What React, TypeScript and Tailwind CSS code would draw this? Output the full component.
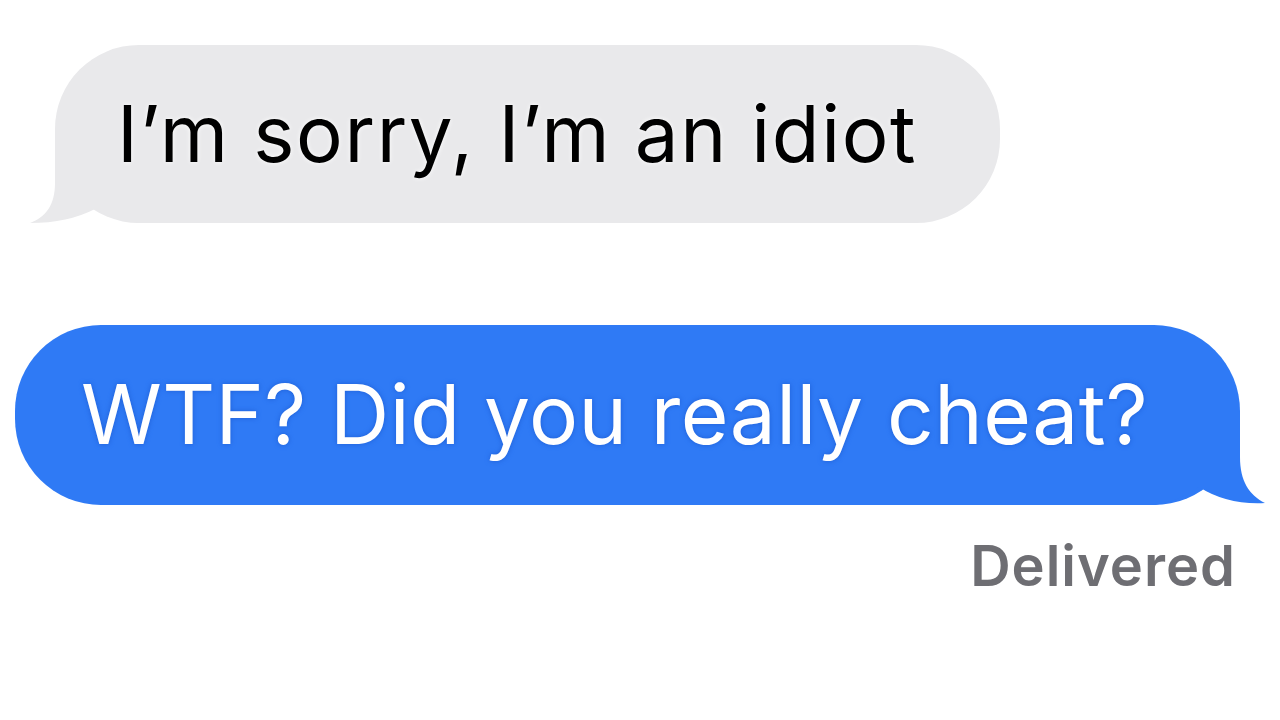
import React from "react";

const font = { fontFamily: "Inter, 'Liberation Sans', sans-serif" };

function ReceivedBubble({ text }: { text: string }) {
  return (
    <div className="relative ml-[55px] mt-[45px] flex h-[178px] w-[945px] items-center rounded-[84px] bg-[#e9e9eb] pl-[62px]">
      {/* tail, bottom-left */}
      <svg
        className="absolute bottom-0 left-[-25px]"
        width="110"
        height="90"
        viewBox="0 0 110 90"
      >
        <path
          d="M25 0 L25 50 C25 72 16 84 0 90 Q38 90 65 76 Q86 88 110 90 L110 0 Z"
          fill="#e9e9eb"
        />
      </svg>
      <span
        className="relative text-[78px] leading-none tracking-[1.6px] text-black [text-shadow:0_0_5px_#ffffff]"
        style={font}
      >
        {text}
      </span>
    </div>
  );
}

function SentBubble({ text }: { text: string }) {
  return (
    <div className="relative ml-[15px] mt-[102px] flex h-[180px] w-[1225px] items-center rounded-[86px] bg-[#2f7af5] pl-[66px]">
      {/* tail, bottom-right */}
      <svg
        className="absolute bottom-0 right-[-25px]"
        width="110"
        height="90"
        viewBox="0 0 110 90"
      >
        <path
          d="M85 0 L85 42 C85 66 94 80 110 88 Q72 90 44 72 Q24 86 0 90 L0 0 Z"
          fill="#2f7af5"
        />
      </svg>
      <span
        className="relative text-[82px] leading-none tracking-[0.4px] text-white [text-shadow:0_0_5px_#1f5fd6]"
        style={font}
      >
        {text}
      </span>
    </div>
  );
}

export default function App() {
  return (
    <div className="flex h-[720px] w-[1280px] flex-col overflow-hidden bg-white">
      <ReceivedBubble text="I’m sorry, I’m an idiot" />
      <SentBubble text="WTF? Did you really cheat?" />
      <div
        className="mr-[44px] mt-[33px] self-end text-[56px] font-semibold leading-none tracking-[1px] text-[#6e6e73]"
        style={font}
      >
        Delivered
      </div>
    </div>
  );
}
